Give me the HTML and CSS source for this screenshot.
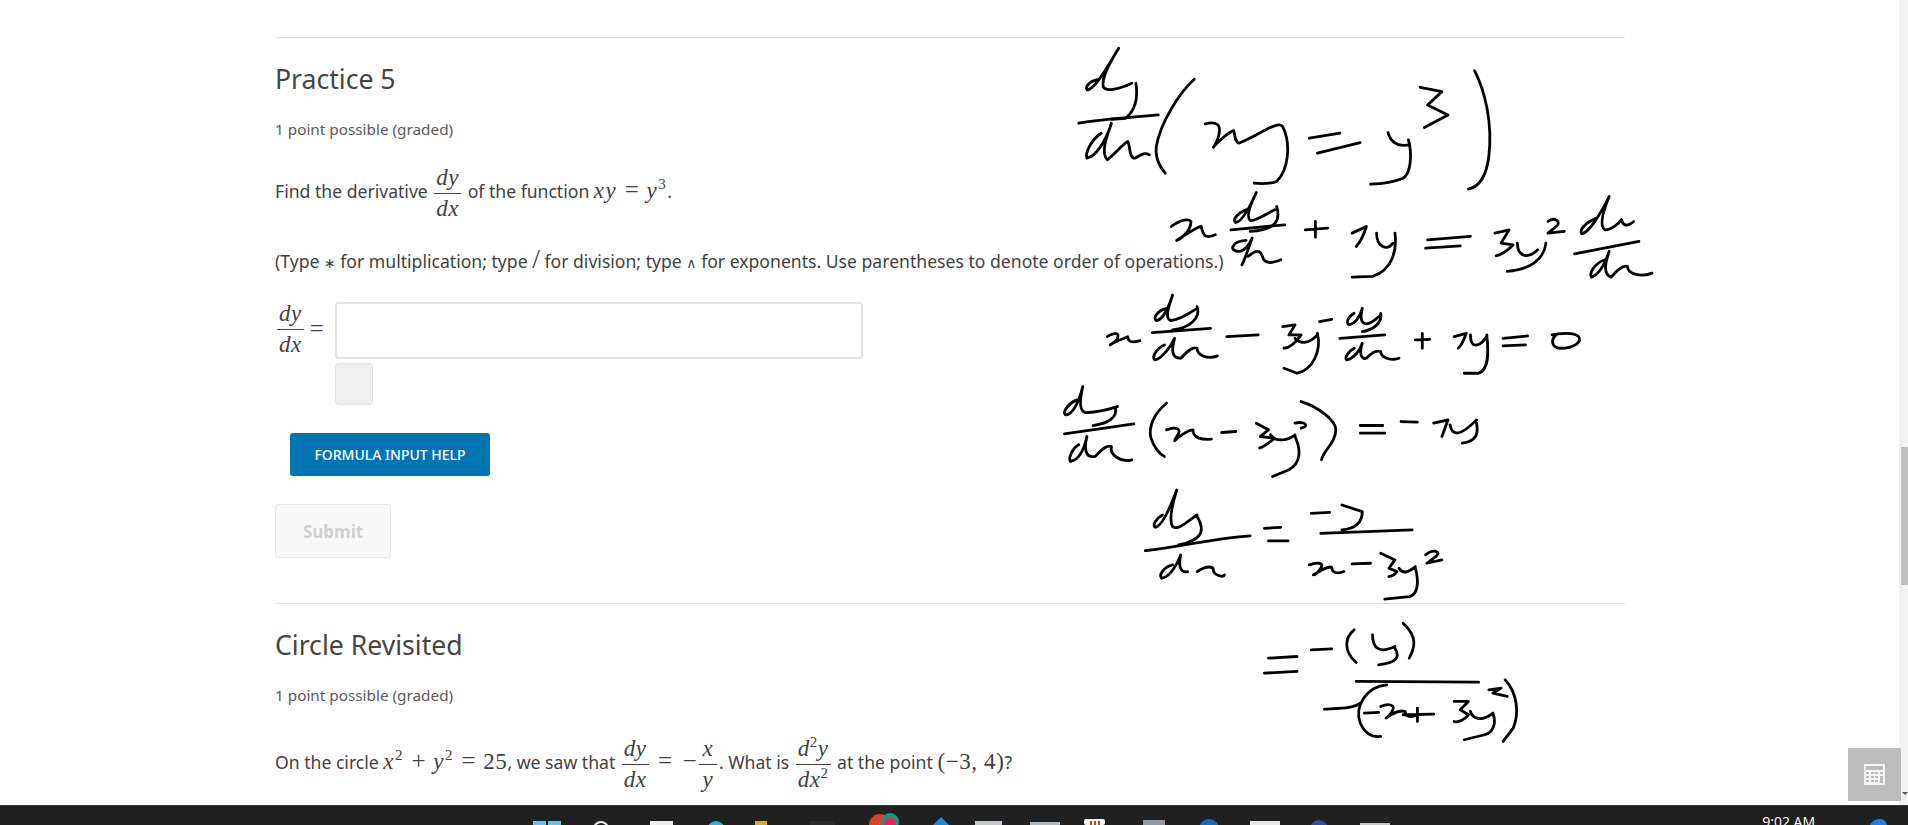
FILE: index.html
```html
<!DOCTYPE html>
<html lang="en">
<head>
    <meta charset="UTF-8">
    <title>Practice 5</title>
    <link rel="stylesheet" href="styles.css">
</head>
<body>
    <div class="screen">
        <main class="page">
            <section class="problem first">
                <h2>Practice 5</h2>
                <p class="points">1 point possible (graded)</p>
                <p class="line deriv">Find the derivative
                    <span class="frac"><span class="num">dy</span><span class="den">dx</span></span>
                    of the function <span class="math">xy</span> <span class="op">=</span> <span class="math">y<sup>3</sup></span>.</p>
                <p class="line type">(Type <span class="sym">∗</span> for multiplication; type <span class="op slash">/</span> for division; type <span class="sym">∧</span> for exponents. Use parentheses to denote order of operations.)</p>
                <div class="answer">
                    <div class="answer-label">
                        <span class="frac"><span class="num">dy</span><span class="den">dx</span></span>
                        <span class="op">=</span>
                    </div>
                    <div class="answer-fields">
                        <input class="answer-input" type="text">
                        <div class="status-box"></div>
                    </div>
                </div>
                <button class="help-button">FORMULA INPUT HELP</button>
                <button class="submit-button" disabled>Submit</button>
            </section>
            <section class="problem">
                <h2>Circle Revisited</h2>
                <p class="points">1 point possible (graded)</p>
                <p class="line circle">On the circle <span class="math">x<sup>2</sup></span> <span class="op">+</span> <span class="math">y<sup>2</sup></span> <span class="op">=</span> <span class="num-text">25</span>, we saw that
                    <span class="frac"><span class="num">dy</span><span class="den">dx</span></span>
                    <span class="op">=</span> <span class="op tight">−</span><span class="frac small"><span class="num">x</span><span class="den">y</span></span>. What is
                    <span class="frac"><span class="num">d<sup>2</sup>y</span><span class="den">dx<sup>2</sup></span></span>
                    at the point <span class="num-text point">(−3, 4)</span>?</p>
            </section>

            <svg class="ink" width="1908" height="805" fill="none" stroke="#000" stroke-linecap="round" stroke-linejoin="round">
                <g transform="translate(1040 30) scale(0.408 0.333)">
                    <path vector-effect="non-scaling-stroke" d="M145 148C125 150 108 170 116 180C135 178 165 110 193 55C175 90 150 140 155 170C160 185 190 180 225 160M235 160C240 200 235 240 210 265L175 268"/>
                    <path vector-effect="non-scaling-stroke" d="M95 280C150 268 230 262 290 255"/>
                    <path vector-effect="non-scaling-stroke" d="M150 310C125 330 110 370 115 385C135 380 160 340 175 280C160 330 150 370 165 390C185 370 205 340 215 335C222 350 218 385 232 385C245 378 255 365 268 375"/>
                    <path vector-effect="non-scaling-stroke" d="M378 148C340 190 295 280 285 350C282 385 295 415 307 430"/>
                    <path vector-effect="non-scaling-stroke" d="M405 282C425 275 440 280 440 300C440 320 430 345 425 352C440 330 465 305 475 302C478 320 478 335 487 340C510 330 530 315 560 295C590 280 590 285 595 290C615 340 610 420 580 455C570 462 540 462 525 460"/>
                    <path vector-effect="non-scaling-stroke" d="M660 325L735 310M680 370L785 338"/>
                    <path vector-effect="non-scaling-stroke" d="M853 308C860 340 880 350 905 345M903 330C912 370 910 430 890 445C860 460 830 462 810 463"/>
                    <path vector-effect="non-scaling-stroke" d="M932 172L985 185L950 225L1000 255L942 293"/>
                    <path vector-effect="non-scaling-stroke" d="M1065 122C1090 180 1110 280 1100 380C1095 430 1080 470 1050 478"/>
                    <path vector-effect="non-scaling-stroke" d="M322 590C345 570 365 565 370 575C370 600 350 625 335 632C360 610 390 590 395 590C400 610 400 630 430 615"/>
                    <path vector-effect="non-scaling-stroke" d="M505 540C485 550 470 570 480 578C495 575 515 530 530 488C515 525 505 560 515 572C530 575 550 555 575 540M580 530C590 570 580 600 515 605"/>
                    <path vector-effect="non-scaling-stroke" d="M468 600L600 585"/>
                    <path vector-effect="non-scaling-stroke" d="M505 632C470 635 460 665 490 665C505 660 515 640 520 625C510 660 500 695 495 705M510 680C530 660 540 660 545 680C550 705 570 700 590 690"/>
                    <path vector-effect="non-scaling-stroke" d="M650 600L705 595M675 575L675 622"/>
                    <path vector-effect="non-scaling-stroke" d="M765 610L800 590C795 610 790 630 775 650M825 610C825 650 850 665 865 640M870 610C875 660 865 720 815 740L765 742"/>
                    <path vector-effect="non-scaling-stroke" d="M950 630L1055 620M945 655L1030 648"/>
                    <path vector-effect="non-scaling-stroke" d="M1115 610L1150 600L1130 640L1160 645C1140 670 1130 675 1118 678"/>
                    <path vector-effect="non-scaling-stroke" d="M1170 640C1170 680 1195 690 1220 660M1240 640C1235 690 1200 720 1145 725"/>
                    <path vector-effect="non-scaling-stroke" d="M1245 575C1260 560 1280 575 1265 590L1245 610L1285 605"/>
                    <path vector-effect="non-scaling-stroke" d="M1365 565C1340 575 1320 600 1328 612C1345 610 1375 550 1395 500C1380 545 1370 590 1385 600C1400 600 1420 580 1425 570C1430 590 1440 590 1455 575"/>
                    <path vector-effect="non-scaling-stroke" d="M1310 672L1468 635"/>
                    <path vector-effect="non-scaling-stroke" d="M1385 690C1360 700 1345 730 1352 742C1370 735 1385 700 1395 665C1385 700 1380 735 1400 742C1415 720 1430 705 1440 710C1440 730 1470 745 1500 730"/>
                </g>
                <g transform="translate(1040 280) scale(0.408 0.333)">
                    <path vector-effect="non-scaling-stroke" d="M165 170C185 155 195 160 190 175C185 190 175 190 172 195C190 180 210 175 215 170C215 185 225 190 245 182"/>
                    <path vector-effect="non-scaling-stroke" d="M310 85C290 90 275 115 285 122C300 120 315 85 325 45C315 80 305 115 320 122C340 120 360 105 385 85M385 80C395 115 365 145 325 150"/>
                    <path vector-effect="non-scaling-stroke" d="M275 158L418 145"/>
                    <path vector-effect="non-scaling-stroke" d="M305 195C285 205 272 235 282 240C300 235 320 200 330 175C322 210 322 235 345 235C365 210 375 200 385 205C385 225 410 240 435 228"/>
                    <path vector-effect="non-scaling-stroke" d="M458 170L535 165"/>
                    <path vector-effect="non-scaling-stroke" d="M595 140L625 135L610 165L640 165C625 190 610 205 598 205M625 175C640 195 660 190 680 165M680 160C690 210 670 270 630 280L598 265"/>
                    <path vector-effect="non-scaling-stroke" d="M685 125L715 118"/>
                    <path vector-effect="non-scaling-stroke" d="M770 100C755 110 748 130 758 135C775 130 785 105 790 85C785 110 785 130 800 132C815 130 825 115 835 105M835 100C840 130 815 150 790 155"/>
                    <path vector-effect="non-scaling-stroke" d="M735 175L845 165"/>
                    <path vector-effect="non-scaling-stroke" d="M770 205C755 215 745 235 752 240C770 235 785 210 790 190C783 215 785 240 800 235C815 215 825 210 835 215C835 230 855 245 880 235"/>
                    <path vector-effect="non-scaling-stroke" d="M920 180L955 178M937 160L937 205"/>
                    <path vector-effect="non-scaling-stroke" d="M1015 170L1045 160C1040 175 1035 195 1025 205M1055 165C1055 205 1075 205 1095 170M1095 165C1100 220 1100 270 1075 280L1040 280"/>
                    <path vector-effect="non-scaling-stroke" d="M1135 175L1195 168M1135 198L1190 195"/>
                    <path vector-effect="non-scaling-stroke" d="M1265 165C1250 180 1255 205 1275 205C1310 205 1330 185 1320 170C1310 155 1270 160 1255 165"/>
                    <path vector-effect="non-scaling-stroke" d="M90 360C70 370 55 395 62 405C80 405 95 365 105 320C98 355 95 390 110 398C125 398 150 395 190 380M185 385C190 410 170 430 130 437"/>
                    <path vector-effect="non-scaling-stroke" d="M60 462L230 432"/>
                    <path vector-effect="non-scaling-stroke" d="M95 495C80 505 68 535 75 545C95 540 108 510 115 470C108 505 110 535 135 530C155 505 165 495 175 500C170 525 200 550 225 540"/>
                    <path vector-effect="non-scaling-stroke" d="M310 370C280 400 265 440 272 475C280 505 295 525 305 530"/>
                    <path vector-effect="non-scaling-stroke" d="M310 450C330 440 345 445 340 460C335 470 330 480 330 483C345 465 365 450 375 450C375 475 395 480 420 478"/>
                    <path vector-effect="non-scaling-stroke" d="M445 458L480 455"/>
                    <path vector-effect="non-scaling-stroke" d="M530 430L560 450L540 470L575 475C560 490 550 500 538 505M565 465C580 490 610 480 625 465M625 470C640 510 640 550 610 570L570 590"/>
                    <path vector-effect="non-scaling-stroke" d="M625 430C640 425 655 430 650 440L640 445"/>
                    <path vector-effect="non-scaling-stroke" d="M640 365C680 380 725 420 725 450C725 490 695 510 690 540"/>
                    <path vector-effect="non-scaling-stroke" d="M785 437L840 437M785 460L845 460"/>
                    <path vector-effect="non-scaling-stroke" d="M885 425L925 427"/>
                    <path vector-effect="non-scaling-stroke" d="M965 430L1000 420C995 435 990 455 985 470M1005 435C1010 470 1030 470 1070 420M1070 430C1075 460 1070 485 1035 490"/>
                </g>
                <g transform="translate(1040 480) scale(0.408 0.333)">
                    <path vector-effect="non-scaling-stroke" d="M300 105C285 115 275 135 282 142C300 140 320 80 335 30C325 70 315 120 325 140C340 152 360 125 385 105M385 110C405 150 400 180 340 195"/>
                    <path vector-effect="non-scaling-stroke" d="M258 212C320 205 430 175 515 168"/>
                    <path vector-effect="non-scaling-stroke" d="M325 255C305 260 290 285 298 295C320 290 335 255 345 225C338 260 345 280 362 275M385 275C410 255 425 260 425 270C425 285 450 295 452 285"/>
                    <path vector-effect="non-scaling-stroke" d="M550 145L590 142M560 183L608 183"/>
                    <path vector-effect="non-scaling-stroke" d="M665 100L710 97M740 75L790 95C790 125 775 145 740 150"/>
                    <path vector-effect="non-scaling-stroke" d="M688 160L912 150"/>
                    <path vector-effect="non-scaling-stroke" d="M660 255C680 245 695 250 690 260C685 275 675 285 670 285C690 270 705 258 715 262C715 275 725 285 745 275"/>
                    <path vector-effect="non-scaling-stroke" d="M765 252L810 250"/>
                    <path vector-effect="non-scaling-stroke" d="M835 220L870 240L855 265L875 275C870 285 860 290 855 290M880 265C890 285 905 275 920 260M920 265C930 310 925 345 905 350L845 358"/>
                    <path vector-effect="non-scaling-stroke" d="M945 225C965 205 985 215 970 230L948 250L985 240"/>
                    <path vector-effect="non-scaling-stroke" d="M560 535L630 530M550 580L630 575"/>
                    <path vector-effect="non-scaling-stroke" d="M665 510L715 507"/>
                    <path vector-effect="non-scaling-stroke" d="M770 450C750 470 740 510 775 548"/>
                    <path vector-effect="non-scaling-stroke" d="M815 465C815 510 835 520 870 500M870 505C885 535 870 550 830 555"/>
                    <path vector-effect="non-scaling-stroke" d="M890 430C925 470 920 500 905 535"/>
                    <path vector-effect="non-scaling-stroke" d="M775 605L1075 607"/>
                    <path vector-effect="non-scaling-stroke" d="M697 688C740 685 770 685 785 670"/>
                    <path vector-effect="non-scaling-stroke" d="M850 615C800 620 770 680 785 730C795 760 815 775 835 770"/>
                    <path vector-effect="non-scaling-stroke" d="M795 700L830 698"/>
                    <path vector-effect="non-scaling-stroke" d="M835 680C855 670 870 675 865 690C860 705 850 715 848 715C865 700 885 690 895 695C895 710 905 715 925 705"/>
                    <path vector-effect="non-scaling-stroke" d="M890 705L965 703M925 685L925 725"/>
                    <path vector-effect="non-scaling-stroke" d="M1015 665L1050 665L1030 690L1050 705C1040 720 1025 730 1015 725"/>
                    <path vector-effect="non-scaling-stroke" d="M1055 695C1060 720 1085 725 1110 700M1110 700C1120 730 1110 760 1090 765L1040 780"/>
                    <path vector-effect="non-scaling-stroke" d="M1100 630L1130 625L1110 640L1145 650"/>
                    <path vector-effect="non-scaling-stroke" d="M1140 600C1170 640 1175 700 1160 745L1135 785"/>
                </g>
            </svg>

            <div class="scrollbar"><div class="thumb"></div></div>
            <button class="calc">
                <svg width="21" height="21" viewBox="0 0 21 21">
                    <rect width="21" height="21" rx="1" fill="#f4f4f4"/>
                    <rect x="2" y="2" width="17" height="4" fill="#bcbcbc"/>
                    <g fill="#bcbcbc">
                        <rect x="2" y="8" width="3" height="2"/><rect x="7" y="8" width="3" height="2"/><rect x="11" y="8" width="3" height="2"/><rect x="16" y="8" width="3" height="2"/>
                        <rect x="2" y="12" width="3" height="2"/><rect x="7" y="12" width="3" height="2"/><rect x="11" y="12" width="3" height="2"/><rect x="16" y="12" width="3" height="7"/>
                        <rect x="2" y="16" width="3" height="2"/><rect x="7" y="16" width="3" height="2"/><rect x="11" y="16" width="3" height="2"/>
                    </g>
                </svg>
            </button>
            <span class="scroll-arrow"></span>
        </main>

        <footer class="taskbar">
            <svg class="tray-icons" width="1908" height="20">
                <rect x="533" y="16" width="13" height="4" fill="#5cc8f5"/><rect x="548" y="16" width="13" height="4" fill="#5cc8f5"/>
                <circle cx="601" cy="24" r="7" fill="none" stroke="#eee" stroke-width="2"/>
                <rect x="650" y="16" width="23" height="4" fill="#eee"/>
                <circle cx="716" cy="25" r="9" fill="#2ab4e6"/>
                <rect x="755" y="16" width="12" height="4" fill="#e0a820"/>
                <rect x="810" y="16" width="25" height="4" fill="#2a2a2a"/>
                <circle cx="880" cy="20" r="11" fill="#e0402c"/>
                <ellipse cx="890" cy="17" rx="9" ry="9" fill="#0b9a85"/>
                <ellipse cx="890" cy="19" rx="6" ry="7" fill="#e8245c"/>
                <path d="M933 20L941 12L949 20Z" fill="#1a8ad4"/>
                <rect x="975" y="16" width="27" height="4" fill="#c4c8cc"/>
                <rect x="1030" y="17" width="30" height="3" fill="#b0b8c0"/>
                <rect x="1084" y="14" width="21" height="6" rx="2" fill="#f4f4f4"/>
                <rect x="1090" y="16" width="2" height="4" fill="#d83b01"/><rect x="1094" y="16" width="2" height="4" fill="#d83b01"/><rect x="1098" y="16" width="2" height="4" fill="#d83b01"/>
                <rect x="1143" y="15" width="22" height="5" fill="#8a9aa6"/>
                <circle cx="1209" cy="24" r="10" fill="#0b6fc4"/>
                <rect x="1250" y="16" width="30" height="4" fill="#e8e8e8"/>
                <circle cx="1319" cy="24" r="9" fill="#3a4a9a"/>
                <rect x="1360" y="18" width="30" height="2" fill="#c8c8c8"/>
                <path d="M1870 20C1872 16 1876 14 1880 14C1884 14 1886 17 1887 20Z" fill="#1883e0"/>
            </svg>
            <span class="clock">9:02 AM</span>
        </footer>
    </div>
</body>
</html>
```

FILE: styles.css
```css
* {
    box-sizing: border-box;
}

html, body {
    margin: 0;
    padding: 0;
    height: 100%;
    overflow: hidden;
    background: #fff;
}

body {
    font-family: 'Noto Sans', 'Open Sans', sans-serif;
    color: #414141;
}

.screen {
    width: 1908px;
    height: 825px;
    display: flex;
    flex-direction: column;
}

.page {
    position: relative;
    flex: 1;
    overflow: hidden;
    padding: 37px 283px 0 275px;
}

.problem {
    border-top: 1px solid #ddd;
}

.problem h2 {
    margin: 0;
    padding-top: 24px;
    font-size: 26.6px;
    line-height: 35px;
    font-weight: 400;
    color: #454545;
}

.points {
    margin: 20px 0 0;
    font-size: 15.3px;
    line-height: 24px;
    color: #5a5a5a;
}

.line {
    margin: 0;
    font-size: 17.6px;
}

.deriv {
    margin-top: 18px;
    height: 62px;
    line-height: 62px;
}

.type {
    margin-top: 24px;
    line-height: 28px;
}

.circle {
    margin-top: 26px;
    line-height: 56px;
}

.frac {
    display: inline-flex;
    flex-direction: column;
    align-items: stretch;
    vertical-align: middle;
    margin: 0 2px;
    font-family: 'Liberation Serif', serif;
    font-style: italic;
    font-size: 23px;
    line-height: 30px;
    letter-spacing: 0.5px;
    text-align: center;
}

.frac .num {
    padding: 0 2px;
    border-bottom: 1px solid #414141;
}

.frac.small {
    min-width: 18px;
}

.frac sup, .math sup {
    font-size: 15px;
    font-style: normal;
    line-height: 0;
}

.math {
    font-family: 'Liberation Serif', serif;
    font-style: italic;
    font-size: 23px;
    letter-spacing: 1.5px;
}

.op {
    font-family: 'Liberation Serif', serif;
    font-size: 25px;
    padding: 0 3px;
}

.op.tight {
    padding-right: 0;
}

.op.slash {
    font-size: 28px;
    padding: 0;
}

.sym {
    font-family: 'DejaVu Sans', sans-serif;
    font-size: 14px;
}

.num-text {
    font-family: 'Liberation Serif', serif;
    font-size: 23px;
    letter-spacing: 0.6px;
}

.answer {
    display: flex;
    margin-top: 25px;
}

.answer-label {
    width: 60px;
    flex: none;
    margin-top: -3px;
    display: flex;
    align-items: flex-start;
    gap: 3px;
}

.answer-label .frac {
    margin: 0 0 0 2px;
    height: 60px;
}

.answer-label .op {
    line-height: 60px;
}

.answer-fields {
    display: flex;
    flex-direction: column;
    gap: 4px;
}

.answer-input {
    display: block;
    width: 528px;
    height: 57px;
    border: 2px solid #e4e4e4;
    border-radius: 3px;
    background: #fff;
}

.status-box {
    width: 38px;
    height: 42px;
    background: #f0f0f0;
    border: 1px solid #e2e2e2;
    border-radius: 4px;
}

.help-button {
    display: block;
    margin: 28px 0 0 15px;
    width: 200px;
    height: 43px;
    background: #0075b4;
    color: #fff;
    border: none;
    border-radius: 3px;
    font-family: inherit;
    font-size: 14px;
    font-weight: 500;
}

.submit-button {
    display: block;
    margin: 28px 0 45px;
    width: 116px;
    height: 54px;
    background: #f9f9f9;
    color: #cfcfcf;
    border: 1px solid #e8e8e8;
    border-radius: 3px;
    font-family: inherit;
    font-size: 17px;
    font-weight: 700;
}

/* handwriting drawn on top of the page */
.ink {
    position: absolute;
    left: 0;
    top: 0;
    stroke-width: 2.8;
    pointer-events: none;
}

.scrollbar {
    position: absolute;
    right: 0;
    top: 0;
    bottom: 0;
    width: 9px;
    background: #f1f1f1;
}

.thumb {
    position: absolute;
    right: 0;
    top: 447px;
    width: 7px;
    height: 138px;
    background: #bdbdbd;
}

.calc {
    position: absolute;
    left: 1848px;
    top: 748px;
    width: 53px;
    height: 53px;
    padding: 0;
    border: none;
    background: #bcbcbc;
    display: flex;
    align-items: center;
    justify-content: center;
}

.scroll-arrow {
    position: absolute;
    right: 0;
    top: 792px;
    border-left: 3px solid transparent;
    border-right: 3px solid transparent;
    border-top: 3px solid #555;
}

.taskbar {
    position: relative;
    height: 20px;
    flex: none;
    overflow: hidden;
    background: #202020;
    border-top: 1px solid #333;
    display: flex;
    justify-content: flex-end;
    padding-right: 93px;
}

.tray-icons {
    position: absolute;
    left: 0;
    top: -1px;
}

.clock {
    font-family: 'Open Sans', sans-serif;
    font-size: 14px;
    line-height: 20px;
    margin-top: 6px;
    color: #fff;
}
```
